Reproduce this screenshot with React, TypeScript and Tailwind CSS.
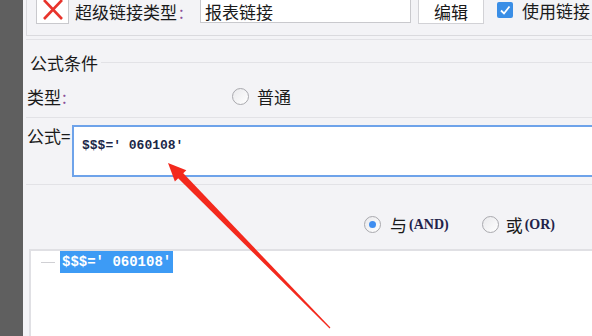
const cjk = { fontFamily: '"Noto Sans CJK SC", "Noto Sans", sans-serif' };
const mono = { fontFamily: '"Liberation Mono", "DejaVu Sans Mono", monospace' };
const serif = { fontFamily: '"Liberation Serif", serif' };

const Radio = ({ checked }: { checked?: boolean }) => (
  <span className="w-[17px] h-[17px] rounded-full border border-[#a9a9ae] bg-gradient-to-br from-[#e9e9ec] to-white flex items-center justify-center shrink-0">
    {checked && <span className="w-[7px] h-[7px] rounded-full bg-[#3f8ef0]" />}
  </span>
);

export default function App() {
  return (
    <div className="relative flex w-[592px] h-[336px] overflow-hidden bg-[#f3f3f6] text-[#1a1a1a] text-[17px] leading-none" style={cjk}>
      <div className="w-[23px] shrink-0 bg-[#5f5f5f]" />

      <div className="flex-1 flex flex-col min-w-0">
        {/* top link row */}
        <div className="ml-[3px] h-[36px] shrink-0 border-l border-b border-[#dadade] flex items-start pl-[9px]">
          <div className="w-[33px] h-[24px] bg-white border border-t-0 border-[#c9c9cd] flex items-start justify-center">
            <svg width="22" height="21" viewBox="0 0 22 21">
              <path d="M2 0 L20 19 M20 0 L2 19" stroke="#e8342c" strokeWidth="2.6" />
            </svg>
          </div>
          <div className="ml-[6px] w-[125px] h-[23px] flex items-center">
            超级链接类型<span className="text-[#8a4f9a] ml-[2px]">:</span>
          </div>
          <div className="w-[211px] h-[23px] bg-white border border-t-0 border-[#c9c9cd] flex items-center pl-[4px]">
            报表链接
          </div>
          <div className="ml-[7px] w-[66px] h-[24px] bg-white border border-t-0 border-[#d2d2d6] flex items-center justify-center">
            编辑
          </div>
          <div className="ml-[13px] h-[20px] flex items-center">
            <span className="w-[16px] h-[16px] bg-[#3a8ee6] rounded-[2px] flex items-center justify-center">
              <svg width="12" height="12" viewBox="0 0 12 12">
                <path d="M2 6.5 L5 9.5 L10.5 2.5" fill="none" stroke="white" strokeWidth="1.8" />
              </svg>
            </span>
            <span className="ml-[9px] whitespace-nowrap">使用链接</span>
          </div>
        </div>

        <div className="ml-[3px] mt-[3px] h-px shrink-0 bg-[#e2e2e6]" />

        {/* group title */}
        <div className="ml-[3px] h-[44px] shrink-0 flex items-center">
          <span className="ml-[4px]">公式条件</span>
          <div className="flex-1 ml-[3px] h-px bg-[#e2e2e6]" />
        </div>

        {/* type row */}
        <div className="h-[24px] shrink-0 flex items-center pl-[4px]">
          <span className="w-[205px]">类型<span className="text-[#8a4f9a] ml-[1px]">:</span></span>
          <Radio />
          <span className="ml-[8px]">普通</span>
        </div>

        <div className="ml-[3px] mt-[9px] h-px shrink-0 bg-[#e2e2e6]" />

        {/* formula row */}
        <div className="mt-[7px] h-[52px] shrink-0 flex items-start pl-[4px]">
          <span className="w-[45px] pt-[2px]">公式=</span>
          <div className="flex-1 h-[52px] bg-white border-2 border-r-0 border-[#6ea3ea] pl-[8px] pt-[6px]">
            <span className="text-[13px] font-bold text-[#1b2748]" style={mono}>$$$=' 060108'</span>
          </div>
        </div>

        <div className="ml-[3px] mt-[7px] h-px shrink-0 bg-[#e2e2e6]" />

        {/* and / or row */}
        <div className="h-[64px] shrink-0 flex items-start pt-[31px] pl-[341px]">
          <Radio checked />
          <span className="ml-[9px]">与</span>
          <span className="ml-[2px] text-[14px] font-bold text-[#22224a] pt-[2px]" style={serif}>(AND)</span>
          <span className="ml-[33px]"><Radio /></span>
          <span className="ml-[7px]">或</span>
          <span className="ml-[2px] text-[14px] font-bold text-[#22224a] pt-[2px]" style={serif}>(OR)</span>
        </div>

        {/* tree box */}
        <div className="ml-[6px] flex-1 bg-white border-l-2 border-t-2 border-[#e0e0e4] pl-[10px]">
          <div className="flex items-center h-[22px]">
            <div className="w-[14px] h-px bg-[#d0d0d4]" />
            <span className="ml-[5px] h-[22px] px-[2px] bg-[#3d9bf5] text-white text-[14px] font-bold flex items-center" style={mono}>
              $$$=' 060108'
            </span>
          </div>
        </div>
      </div>

      {/* annotation arrow */}
      <svg className="absolute inset-0 pointer-events-none" width="592" height="336" viewBox="0 0 592 336">
        <polygon points="168,163 174.9,181.5 186.3,170.3" fill="#f3291d" />
        <polygon points="181.6,171.6 176.4,176.6 329.6,328.4 330.4,327.6" fill="#f3291d" />
      </svg>
    </div>
  );
}
